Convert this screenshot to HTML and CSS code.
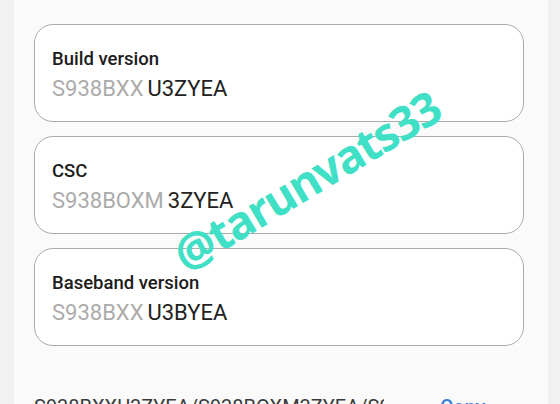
FILE: index.html
```html
<!DOCTYPE html>
<html lang="en">
<head>
  <meta charset="UTF-8" />
  <meta name="viewport" content="width=device-width, initial-scale=1.0"/>
  <title>Software information</title>
  <link rel="stylesheet" href="styles.css">
</head>
<body>
  <div class="panel">
    <div class="card">
      <div class="label">Build version</div>
      <div class="value"><span class="dim">S938BXX</span><span>U3ZYEA</span></div>
    </div>
    <div class="card">
      <div class="label">CSC</div>
      <div class="value"><span class="dim">S938BOXM</span><span>3ZYEA</span></div>
    </div>
    <div class="card">
      <div class="label">Baseband version</div>
      <div class="value"><span class="dim">S938BXX</span><span>U3BYEA</span></div>
    </div>
    <div class="full-row">
      <span class="full-text">S938BXXU3ZYEA/S938BOXM3ZYEA/S938BXXU3BYEA</span>
      <span class="copy">Copy</span>
    </div>
  </div>

  <div class="watermark">@tarunvats33</div>
</body>
</html>
```

FILE: styles.css
```css
* { box-sizing: border-box; }

body {
  margin: 0;
  font-family: Roboto, 'Noto Sans', sans-serif;
  background: #f1f1f1;
  height: 404px;
  overflow: hidden;
  position: relative;
}

.panel {
  margin: 0 12px 0 14px;
  background: #fafafa;
  padding: 24px 24px 0 20px;
  height: 404px;
  display: flex;
  flex-direction: column;
  gap: 14px;
  overflow: hidden;
}

.card {
  flex-shrink: 0;
  height: 98px;
  background: #ffffff;
  border: 1.5px solid #ababab;
  border-radius: 19px;
  padding: 23px 20px 0 17px;
}

.label {
  font-size: 18.5px;
  line-height: 22px;
  font-weight: 500;
  color: #1c1c1c;
}

.value {
  margin-top: 6px;
  font-size: 22px;
  line-height: 26px;
  font-weight: 400;
  color: #222;
  display: flex;
  gap: 4px;
}

.value .dim {
  color: #ababab;
}

.full-row {
  flex-shrink: 0;
  margin-top: 35px;
  display: flex;
  align-items: center;
  gap: 56px;
}

.full-text {
  font-size: 20px;
  line-height: 24px;
  color: #3a3a3a;
  width: 350px;
  overflow: hidden;
  white-space: nowrap;
}

.copy {
  font-size: 20px;
  line-height: 24px;
  font-weight: 500;
  color: #3a7fd5;
}

.watermark {
  position: absolute;
  left: 306px;
  top: 180px;
  transform: translate(-50%, -50%) rotate(-31deg);
  font-family: 'Open Sans', Roboto, sans-serif;
  font-size: 46px;
  font-weight: 700;
  letter-spacing: -1.5px;
  color: #3fe0c6;
  white-space: nowrap;
}
```
